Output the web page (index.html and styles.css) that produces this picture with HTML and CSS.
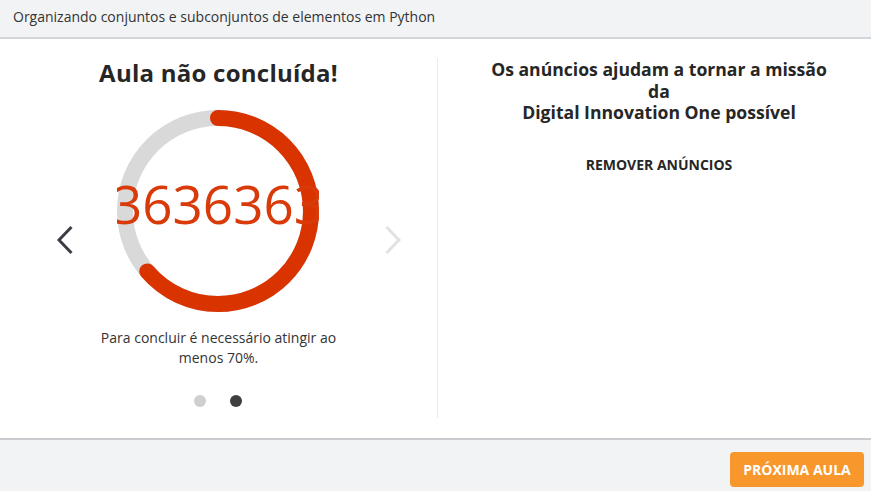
FILE: index.html
```html
<!DOCTYPE html>
<html lang="pt-BR">
<head>
<meta charset="utf-8">
<title>Aula não concluída</title>
<link rel="stylesheet" href="styles.css">
</head>
<body>
<div class="page">
  <header class="topbar">Organizando conjuntos e subconjuntos de elementos em Python</header>
  <main class="main">
    <section class="result">
      <h1 class="result-title">Aula não concluída!</h1>
      <div class="carousel">
        <svg class="chevron chevron-prev" width="18" height="32" viewBox="0 0 18 32"><polyline points="15.5,3 3,16 15.5,29" fill="none" stroke="#3a3f47" stroke-width="3" stroke-linecap="butt" stroke-linejoin="miter"/></svg>
        <div class="gauge">
          <svg class="gauge-ring" width="202" height="202" viewBox="0 0 202 202">
            <circle cx="101" cy="101" r="93" fill="none" stroke="#d9d9d9" stroke-width="16"/>
            <circle cx="101" cy="101" r="93" fill="none" stroke="#d93300" stroke-width="16" stroke-linecap="round" stroke-dasharray="371.9 600" transform="rotate(-90 101 101)"/>
          </svg>
          <div class="gauge-value"><span>3636363</span></div>
        </div>
        <svg class="chevron chevron-next" width="18" height="32" viewBox="0 0 18 32"><polyline points="2.5,3 15,16 2.5,29" fill="none" stroke="#e1e1e1" stroke-width="3" stroke-linecap="butt" stroke-linejoin="miter"/></svg>
      </div>
      <p class="result-note">Para concluir é necessário atingir ao menos 70%.</p>
      <div class="dots">
        <span class="dot"></span>
        <span class="dot dot-active"></span>
      </div>
    </section>
    <section class="ads">
      <h2 class="ads-title">Os anúncios ajudam a tornar a missão<br>da<br>Digital Innovation One possível</h2>
      <a class="ads-remove">REMOVER ANÚNCIOS</a>
    </section>
  </main>
  <footer class="footer">
    <button class="next-btn">PRÓXIMA AULA</button>
  </footer>
</div>
</body>
</html>
```

FILE: styles.css
```css
* { box-sizing: border-box; }
html, body { margin: 0; padding: 0; }
body {
  font-family: "Open Sans", "Noto Sans", sans-serif;
  color: #333;
  background: #fff;
  width: 871px;
  height: 491px;
  overflow: hidden;
}
.page {
  display: flex;
  flex-direction: column;
  height: 491px;
}
.topbar {
  height: 39px;
  background: #f2f3f5;
  border-bottom: 2px solid #d2d5d9;
  padding: 7px 0 0 13px;
  font-size: 14px;
  line-height: 20px;
  color: #333;
}
.main {
  height: 399px;
  display: flex;
  padding: 19px 0 20px;
}
.result {
  width: 438px;
  border-right: 1px solid #ececec;
  display: flex;
  flex-direction: column;
  align-items: center;
}
.result-title {
  margin: 0;
  font-size: 24px;
  line-height: 29px;
  font-weight: 700;
  letter-spacing: 0.25px;
  color: #262626;
}
.carousel {
  align-self: stretch;
  display: flex;
  align-items: center;
  padding-left: 56px;
  margin-top: 23px;
}
.chevron { flex: none; margin-top: 57px; }
.chevron-prev { margin-right: 43px; }
.chevron-next { margin-left: 65px; }
.gauge {
  position: relative;
  width: 202px;
  height: 202px;
  flex: none;
}
.gauge-ring { display: block; }
.gauge-value {
  position: absolute;
  left: 0;
  top: 0;
  width: 202px;
  height: 202px;
  overflow: hidden;
  display: flex;
  justify-content: center;
  align-items: center;
  padding-bottom: 14px;
}
.gauge-value span {
  font-size: 53px;
  line-height: 72px;
  color: #d83a0a;
  white-space: nowrap;
  flex: none;
}
.result-note {
  margin: 16px 0 0;
  width: 250px;
  text-align: center;
  font-size: 14px;
  line-height: 20px;
  color: #333;
}
.dots {
  display: flex;
  gap: 24px;
  margin-top: 27px;
  margin-left: -2px;
}
.dot {
  width: 12px;
  height: 12px;
  border-radius: 50%;
  background: #cfcfcf;
}
.dot-active { background: #3f3f3f; }
.ads {
  flex: 1;
  display: flex;
  flex-direction: column;
  align-items: center;
  padding: 1px 0 0 9px;
}
.ads-title {
  margin: 0;
  text-align: center;
  font-size: 17.6px;
  line-height: 21.5px;
  font-weight: 700;
  color: #262626;
}
.ads-remove {
  margin-top: 31px;
  font-size: 14px;
  line-height: 20px;
  font-weight: 700;
  color: #262626;
}
.footer {
  flex: 1;
  background: #f2f3f5;
  border-top: 2px solid #c9cbcf;
  display: flex;
  justify-content: flex-end;
  padding: 12px 7px 0 0;
}
.next-btn {
  width: 134px;
  height: 35px;
  border: none;
  border-radius: 4px;
  background: #f8972c;
  color: #fff;
  font-family: "Open Sans", "Noto Sans", sans-serif;
  font-size: 14px;
  font-weight: 700;
  padding: 0;
}
```
